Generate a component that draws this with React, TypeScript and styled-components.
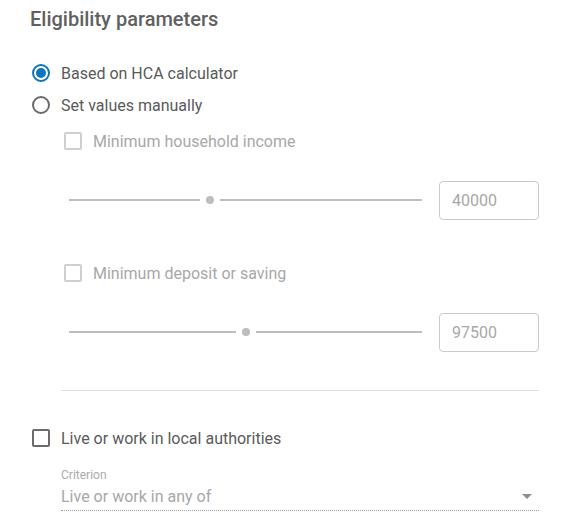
import styled, { createGlobalStyle } from "styled-components";

const GlobalStyle = createGlobalStyle`
  body {
    margin: 0;
    background: #ffffff;
    font-family: Roboto, "Liberation Sans", Arial, sans-serif;
  }
`;

type Threshold = {
  label: string;
  value: number;
  max: number;
};

const thresholds: Threshold[] = [
  { label: "Minimum household income", value: 40000, max: 100000 },
  { label: "Minimum deposit or saving", value: 97500, max: 195000 },
];

const App = () => {
  return (
    <>
      <GlobalStyle />
      <Page>
        <Title>Eligibility parameters</Title>
        <RadioGroup>
          <RadioRow>
            <RadioCircle $checked />
            <Label>Based on HCA calculator</Label>
          </RadioRow>
          <RadioRow>
            <RadioCircle />
            <Label>Set values manually</Label>
          </RadioRow>
        </RadioGroup>

        <ManualSection>
          {thresholds.map((t) => {
            const pct = (t.value / t.max) * 100;
            return (
              <ThresholdBlock key={t.label}>
                <CheckRow $indent>
                  <CheckBox $disabled />
                  <Label $disabled>{t.label}</Label>
                </CheckRow>
                <SliderRow>
                  <Slider>
                    <Track style={{ width: `calc(${pct}% - 10px)` }} />
                    <Thumb />
                    <Track $grow />
                  </Slider>
                  <ValueBox>{t.value}</ValueBox>
                </SliderRow>
              </ThresholdBlock>
            );
          })}
          <Divider />
        </ManualSection>

        <CheckRow>
          <CheckBox />
          <Label>Live or work in local authorities</Label>
        </CheckRow>

        <SelectField>
          <FieldLabel>Criterion</FieldLabel>
          <SelectControl>
            <SelectValue>Live or work in any of</SelectValue>
            <Arrow />
          </SelectControl>
        </SelectField>
      </Page>
    </>
  );
};

export default App;

const Page = styled.div`
  width: 570px;
  box-sizing: border-box;
  padding: 7px 31px 0 30px;
`;

const Title = styled.h2`
  margin: 0;
  font-size: 20px;
  line-height: 24px;
  font-weight: 500;
  color: #606060;
`;

const RadioGroup = styled.div`
  margin-top: 26px;
  display: flex;
  flex-direction: column;
`;

const RadioRow = styled.div`
  height: 32px;
  display: flex;
  align-items: center;
  gap: 11px;
  padding-left: 2px;
`;

const RadioCircle = styled.span<{ $checked?: boolean }>`
  width: 18px;
  height: 18px;
  box-sizing: border-box;
  border-radius: 50%;
  border: 2px solid ${(p) => (p.$checked ? "#0f75bd" : "#6b6b6b")};
  display: flex;
  align-items: center;
  justify-content: center;

  &::after {
    content: "";
    display: ${(p) => (p.$checked ? "block" : "none")};
    width: 10px;
    height: 10px;
    border-radius: 50%;
    background: #0f75bd;
  }
`;

const Label = styled.span<{ $disabled?: boolean }>`
  font-size: 16px;
  color: ${(p) => (p.$disabled ? "#a8a8a8" : "#5a5a5a")};
  white-space: nowrap;
`;

const ManualSection = styled.div`
  margin-left: 31px;
  padding-top: 4px;
`;

const ThresholdBlock = styled.div`
  display: flex;
  flex-direction: column;
  & + & {
    margin-top: 37px;
  }
`;

const CheckRow = styled.div<{ $indent?: boolean }>`
  height: 32px;
  display: flex;
  align-items: center;
  gap: 11px;
  padding-left: ${(p) => (p.$indent ? "3px" : "2px")};
  margin-top: ${(p) => (p.$indent ? "0" : "31px")};
`;

const CheckBox = styled.span<{ $disabled?: boolean }>`
  width: 18px;
  height: 18px;
  box-sizing: border-box;
  border-radius: 2px;
  border: 2px solid ${(p) => (p.$disabled ? "#cfcfcf" : "#6b6b6b")};
`;

const SliderRow = styled.div`
  margin-top: 23px;
  height: 40px;
  display: flex;
  align-items: center;
  gap: 17px;
`;

const Slider = styled.div`
  flex: 1;
  margin-left: 8px;
  display: flex;
  align-items: center;
`;

const Track = styled.span<{ $grow?: boolean }>`
  height: 2px;
  background: #bdbdbd;
  flex: ${(p) => (p.$grow ? "1" : "none")};
`;

const Thumb = styled.span`
  width: 8px;
  height: 8px;
  margin: 0 6px;
  border-radius: 50%;
  background: #bdbdbd;
  flex: none;
`;

const ValueBox = styled.div`
  width: 100px;
  height: 39px;
  box-sizing: border-box;
  border: 1px solid #cacaca;
  border-radius: 4px;
  padding-left: 12px;
  display: flex;
  align-items: center;
  font-size: 16px;
  color: #a8a8a8;
`;

const Divider = styled.hr`
  margin: 38px 0 0;
  border: none;
  border-top: 1px solid #e0e0e0;
`;

const SelectField = styled.div`
  margin: 14px 0 0 31px;
  display: flex;
  flex-direction: column;
`;

const FieldLabel = styled.label`
  font-size: 12px;
  line-height: 14px;
  color: #ababab;
`;

const SelectControl = styled.div`
  height: 28px;
  display: flex;
  align-items: center;
  justify-content: space-between;
  border-bottom: 1px dotted #a0a0a0;
  padding-right: 7px;
`;

const SelectValue = styled.span`
  font-size: 16px;
  color: #a8a8a8;
`;

const Arrow = styled.span`
  width: 0;
  height: 0;
  border-left: 5px solid transparent;
  border-right: 5px solid transparent;
  border-top: 5px solid #8e8e8e;
`;
